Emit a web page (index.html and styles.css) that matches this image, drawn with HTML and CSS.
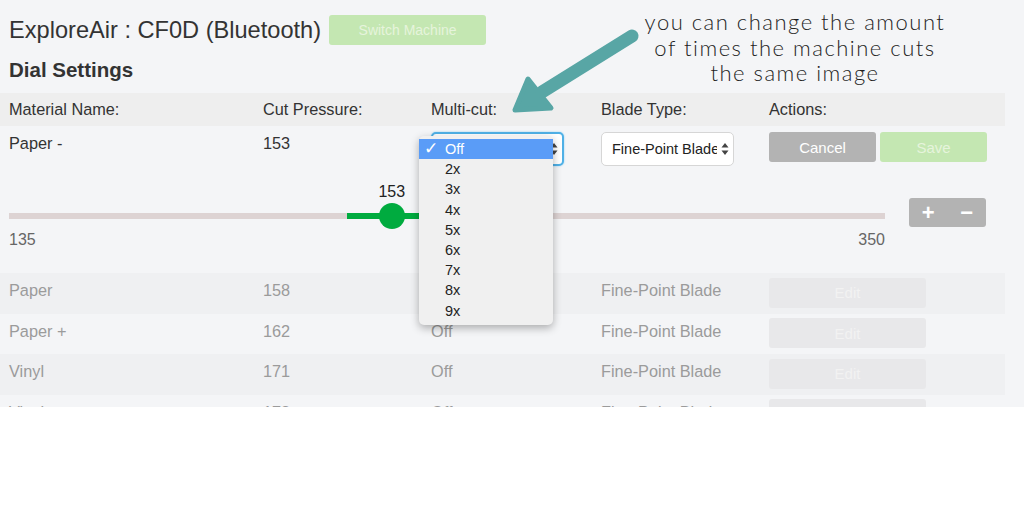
FILE: index.html
```html
<!DOCTYPE html>
<html>

<head>
    <title>Dial Settings</title>
    <link rel="stylesheet" href="styles.css">
</head>

<body>

    <div id="app">
        <div class="machine-bar">
            <h1 class="machine-name">ExploreAir : CF0D (Bluetooth)</h1>
            <button class="btn btn-green btn-switch">Switch Machine</button>
        </div>
        <h2 class="section-title">Dial Settings</h2>

        <div class="table">
            <div class="row row-head">
                <div>Material Name:</div>
                <div>Cut Pressure:</div>
                <div>Multi-cut:</div>
                <div>Blade Type:</div>
                <div>Actions:</div>
            </div>

            <div class="row row-edit">
                <div class="cell-text">Paper -</div>
                <div class="cell-text">153</div>
                <div>
                    <div class="select select-focus">
                        <span>Off</span>
                        <svg class="arrows" viewBox="0 0 8 14" width="8" height="14"><path d="M4 1 L7.5 5.5 H0.5 Z M4 13 L7.5 8.5 H0.5 Z" fill="#444" /></svg>
                    </div>
                </div>
                <div>
                    <div class="select">
                        <span class="clip">Fine-Point Blade</span>
                        <svg class="arrows" viewBox="0 0 8 14" width="8" height="14"><path d="M4 1 L7.5 5.5 H0.5 Z M4 13 L7.5 8.5 H0.5 Z" fill="#444" /></svg>
                    </div>
                </div>
                <div class="actions">
                    <button class="btn btn-grey btn-action">Cancel</button>
                    <button class="btn btn-green btn-action">Save</button>
                </div>
            </div>

            <div class="slider-row">
                <div class="slider">
                    <div class="slider-track">
                        <div class="slider-fill" style="left: 38.6%; width: 10.3%"></div>
                        <div class="slider-thumb" style="left: 43.7%"><span class="thumb-label">153</span></div>
                    </div>
                    <div class="slider-limits">
                        <span>135</span>
                        <span>350</span>
                    </div>
                </div>
                <div class="stepper">
                    <span>+</span>
                    <span>&minus;</span>
                </div>
            </div>

            <div class="row row-data">
                <div>Paper</div>
                <div>158</div>
                <div>Off</div>
                <div>Fine-Point Blade</div>
                <div><button class="btn btn-edit">Edit</button></div>
            </div>
            <div class="row row-data">
                <div>Paper +</div>
                <div>162</div>
                <div>Off</div>
                <div>Fine-Point Blade</div>
                <div><button class="btn btn-edit">Edit</button></div>
            </div>
            <div class="row row-data">
                <div>Vinyl</div>
                <div>171</div>
                <div>Off</div>
                <div>Fine-Point Blade</div>
                <div><button class="btn btn-edit">Edit</button></div>
            </div>
            <div class="row row-data">
                <div>Vinyl +</div>
                <div>178</div>
                <div>Off</div>
                <div>Fine-Point Blade</div>
                <div><button class="btn btn-edit">Edit</button></div>
            </div>
        </div>

        <!-- open multi-cut menu -->
        <ul class="dropdown">
            <li class="selected"><span class="check">&#10003;</span>Off</li>
            <li>2x</li>
            <li>3x</li>
            <li>4x</li>
            <li>5x</li>
            <li>6x</li>
            <li>7x</li>
            <li>8x</li>
            <li>9x</li>
        </ul>

        <!-- annotation -->
        <p class="note">you can change the amount<br>of times the machine cuts<br>the same image</p>
        <svg class="note-arrow" viewBox="0 0 150 100" width="150" height="100">
            <line x1="132" y1="16" x2="42" y2="72" stroke="#58a6a5" stroke-width="13" stroke-linecap="round" />
            <polygon points="28,59 51,88 15,90" fill="#58a6a5" stroke="#58a6a5" stroke-width="5" stroke-linejoin="round" />
        </svg>
    </div>

</body>

</html>
```

FILE: styles.css
```css
body {
    margin: 0;
    background-color: #ffffff;
    font-family: "Liberation Sans", Arial, sans-serif;
    color: #333333;
}

#app {
    position: relative;
    height: 407px;
    overflow: hidden;
    background-color: #f4f5f7;
}

.machine-bar {
    display: flex;
    align-items: center;
    gap: 8px;
    padding: 15px 0 0 9px;
}

.machine-name {
    margin: 0;
    font-size: 23.6px;
    font-weight: normal;
    color: #333333;
}

.btn {
    border: none;
    border-radius: 3px;
    font-family: "Liberation Sans", Arial, sans-serif;
    font-size: 14px;
    color: #ffffff;
    padding: 0;
}

.btn-green {
    background-color: #c4e7b2;
    color: #e6f4dc;
}

.btn-grey {
    background-color: #b3b3b3;
}

.btn-switch {
    width: 157px;
    height: 30px;
}

.section-title {
    margin: 13px 0 0 9px;
    font-size: 20.5px;
    font-weight: 600;
    color: #333333;
    height: 25px;
}

.table {
    margin-top: 10px;
    width: 1005px;
}

.row {
    display: grid;
    grid-template-columns: 254px 168px 170px 168px 1fr;
    padding-left: 9px;
}

.row-head {
    height: 33px;
    align-items: center;
    background-color: #eeeeee;
    font-size: 16.3px;
}

.row-edit {
    padding-top: 6px;
    height: 52px;
    font-size: 16.3px;
}

.cell-text {
    padding-top: 2px;
}

.select {
    display: flex;
    align-items: center;
    justify-content: space-between;
    box-sizing: border-box;
    width: 133px;
    height: 34px;
    padding: 0 4px 0 10px;
    background-color: #ffffff;
    border: 1px solid #d6d6d6;
    border-radius: 5px;
    font-size: 14.5px;
    color: #222222;
}

.select-focus {
    border: 2px solid #4fb0e6;
    box-shadow: 0 0 2px #8fd0f2;
}

.clip {
    white-space: nowrap;
    overflow: hidden;
    width: 105px;
}

.arrows {
    display: block;
}

.actions {
    display: flex;
    gap: 4px;
}

.btn-action {
    width: 107px;
    height: 30px;
    font-size: 15px;
}

.slider-row {
    display: flex;
    align-items: flex-start;
    gap: 24px;
    padding-left: 9px;
    height: 89px;
}

.slider {
    width: 876px;
    padding-top: 29px;
}

.slider-track {
    position: relative;
    height: 6px;
    background-color: #ddd3d3;
}

.slider-fill {
    position: absolute;
    top: 0;
    height: 6px;
    background-color: #00ab3f;
}

.slider-thumb {
    position: absolute;
    top: -10px;
    width: 26px;
    height: 26px;
    margin-left: -13px;
    border-radius: 50%;
    background-color: #00ab3f;
}

.thumb-label {
    position: absolute;
    bottom: 28px;
    left: 50%;
    transform: translateX(-50%);
    font-size: 16px;
    color: #222222;
}

.slider-limits {
    display: flex;
    justify-content: space-between;
    margin-top: 12px;
    font-size: 16px;
    color: #666666;
}

.stepper {
    display: flex;
    justify-content: space-around;
    align-items: center;
    margin-top: 14px;
    width: 77px;
    height: 29px;
    border-radius: 3px;
    background-color: #b3b3b3;
    color: #ffffff;
    font-size: 22px;
    font-weight: bold;
}

.row-data {
    box-sizing: border-box;
    height: 40.5px;
    padding-bottom: 5px;
    align-items: center;
    font-size: 16.3px;
    color: #9b9b9b;
}

.row-data:nth-of-type(even) {
    background-color: #eff0f2;
}

.btn-edit {
    width: 157px;
    height: 30px;
    margin-top: 4px;
    background-color: #e8e8ea;
    color: #f2f2f2;
    font-size: 15px;
}

.dropdown {
    position: absolute;
    left: 419px;
    top: 136px;
    width: 134px;
    height: 189px;
    box-sizing: border-box;
    margin: 0;
    padding: 3px 0 0;
    list-style: none;
    background-color: #f0f0f0;
    border-radius: 5px;
    box-shadow: 0 3px 9px rgba(0, 0, 0, 0.3);
    font-size: 14.5px;
    color: #222222;
}

.dropdown li {
    height: 20.2px;
    line-height: 20px;
    padding-left: 26px;
    position: relative;
}

.dropdown .selected {
    background-color: #5a9cf7;
    color: #ffffff;
}

.check {
    position: absolute;
    left: 5px;
    font-size: 17px;
}

.note {
    position: absolute;
    left: 620px;
    top: 9px;
    width: 350px;
    margin: 0;
    text-align: center;
    font-family: Lato, sans-serif;
    font-weight: 300;
    font-size: 22px;
    line-height: 25.5px;
    letter-spacing: 1.5px;
    color: #1e1e1e;
}

.note-arrow {
    position: absolute;
    left: 500px;
    top: 20px;
}
```
